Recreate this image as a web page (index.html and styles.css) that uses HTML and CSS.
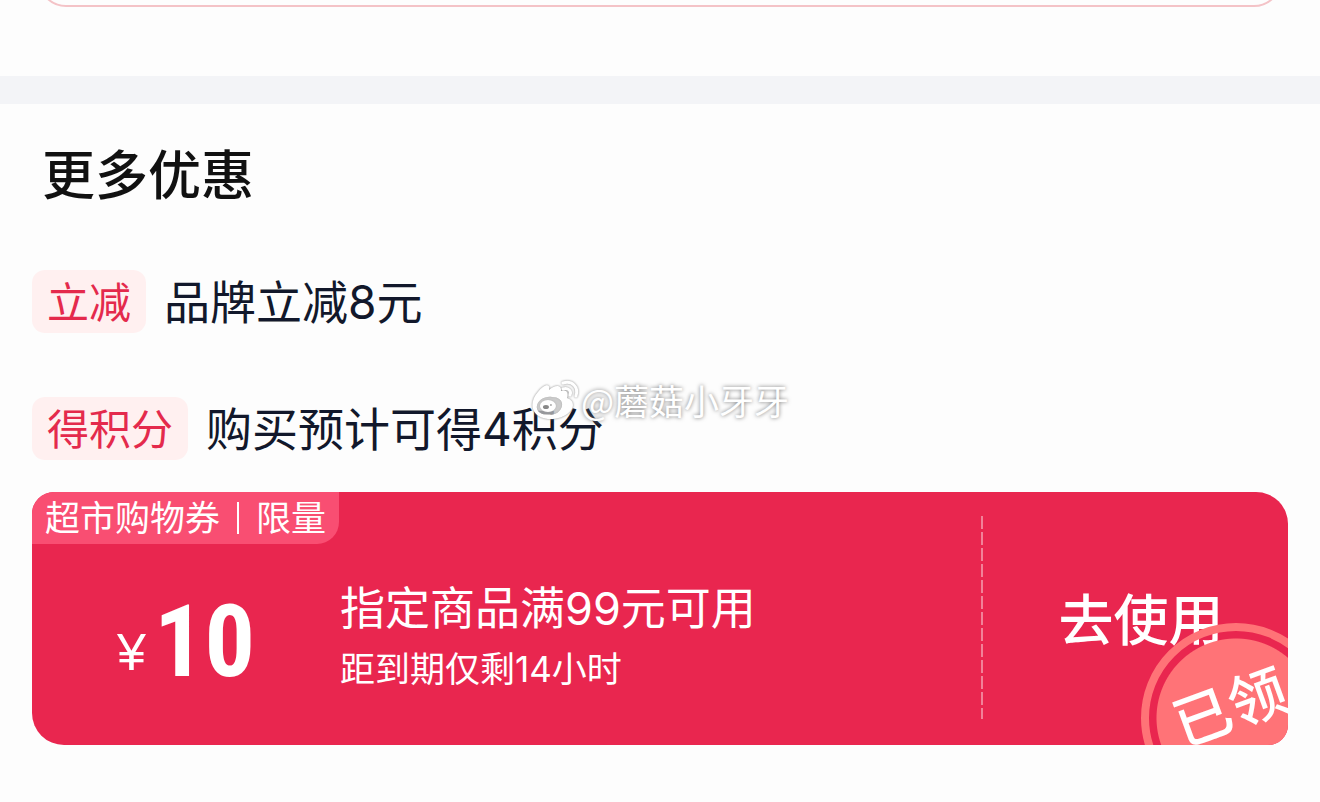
FILE: index.html
```html
<!DOCTYPE html>
<html lang="zh-CN">
<head>
<meta charset="utf-8">
<meta name="viewport" content="width=device-width, initial-scale=1">
<title>更多优惠</title>
<link rel="stylesheet" href="styles.css">
</head>
<body>
<div class="page">
  <section class="previous"><div class="previous-card"></div></section>
  <main class="offers">
    <h1 class="title">更多优惠</h1>
    <ul class="benefits">
      <li class="benefit"><span class="tag">立减</span><span class="benefit-text">品牌立减8元</span></li>
      <li class="benefit"><span class="tag">得积分</span><span class="benefit-text">购买预计可得4积分</span></li>
    </ul>
    <article class="coupon">
      <div class="coupon-label"><span>超市购物券</span><span class="label-rule"></span><span>限量</span></div>
      <div class="amount"><span class="currency">¥</span><span class="value">10</span></div>
      <div class="details">
        <p class="condition">指定商品满99元可用</p>
        <p class="expiry">距到期仅剩14小时</p>
      </div>
      <svg class="divider" width="2" height="205" viewBox="0 0 2 205" aria-hidden="true"><path d="M1 0V203" stroke="#fff" stroke-opacity=".42" stroke-width="2" stroke-dasharray="13 3"/></svg>
      <button class="use" type="button">去使用</button>
      <div class="stamp"><span class="stamp-text">已领</span></div>
    </article>
  </main>
  <div class="watermark">
    <svg class="weibo" width="50" height="44" viewBox="0 0 50 44" aria-hidden="true">
      <path fill="#fff" fill-rule="evenodd" d="M30 13C31 5 22 8 18 12C20 5 13 6 7 14C-2 24 -1 39 17 41C31 42 42 34 42 27C42 23 39 21 36 20C38 14 35 11 30 13ZM18 37C10 37 5 33 6 28C7 22 14 18 21 19C28 19 32 23 31 28C30 33 25 37 18 37Z"/>
      <path fill="#d8d8d8" fill-opacity=".5" d="M6 28C7 22 14 18 21 19C28 19 32 23 31 28C30 33 25 37 18 37C10 37 5 33 6 28Z"/>
      <ellipse cx="17" cy="28" rx="8" ry="6" fill="#fff"/>
      <ellipse cx="15" cy="29" rx="3" ry="2" fill="#888"/>
      <circle cx="20" cy="27" r="1" fill="#aaa"/>
      <path fill="none" stroke="#fff" stroke-width="3" stroke-linecap="round" d="M32 5C41 2 48 9 45 18M32 11C37 9 41 13 39 17"/>
    </svg>
    <span>@蘑菇小牙牙</span>
  </div>
</div>
</body>
</html>
```
FILE: styles.css
```css
* { box-sizing: border-box; }
body {
  margin: 0;
  background: #fdfdfd;
  color: #12182b;
  font-family: Inter, "Noto Sans CJK SC", sans-serif;
}
.page { position: relative; overflow: hidden; }
.previous {
  display: flex;
  align-items: flex-end;
  height: 104px;
  padding: 0 38px 69px;
  border-bottom: 28px solid #f3f4f7;
}
.previous-card {
  flex: 1;
  height: 64px;
  border: 2px solid #f4c3c7;
  border-radius: 28px;
}
.offers { padding: 36px 32px 57px; }
.title {
  margin: 0 0 58px;
  padding-left: 10px;
  color: #111;
  font-size: 53px;
  font-weight: 500;
  line-height: 72px;
}
.benefits {
  display: grid;
  gap: 64px;
  margin: 0 0 32px;
  padding: 0;
  list-style: none;
}
.benefit { display: flex; align-items: center; gap: 18px; }
.tag {
  padding: 3px 15px 0;
  border-radius: 13px;
  background: #fff0f0;
  color: #e42a4c;
  font-size: 42px;
  line-height: 60px;
}
.benefit-text { font-size: 46px; line-height: 60px; }
.coupon {
  position: relative;
  display: grid;
  grid-template-columns: 308fr 641fr 2px 305fr;
  align-items: center;
  padding: 24px 0;
  overflow: hidden;
  border-radius: 22px 32px 20px 32px;
  background: #e9264f;
  color: #fff;
}
.coupon-label {
  position: absolute;
  top: 0;
  left: 0;
  display: flex;
  align-items: center;
  padding: 0 13px;
  border-bottom-right-radius: 22px;
  background: #f94e72;
  font-size: 35px;
  line-height: 52px;
}
.label-rule { width: 2px; height: 32px; margin: 0 17px; background: #fff; }
.amount {
  display: flex;
  align-items: flex-end;
  gap: 8px;
  padding: 46px 0 0 85px;
}
.currency { font-family: "Liberation Sans", Arial, sans-serif; font-size: 52px; line-height: 84px; }
.value { font-family: "Roboto Condensed", Roboto, sans-serif; font-size: 100px; font-weight: 700; line-height: 104px; }
.details { padding-top: 36px; }
.condition, .expiry { margin: 0; }
.condition { font-size: 45px; line-height: 64px; }
.expiry { font-size: 35px; line-height: 56px; }
.use {
  padding: 2px 0 0 11px;
  border: 0;
  background: transparent;
  color: #fff;
  font: inherit;
  font-size: 55px;
  font-weight: 500;
  line-height: 72px;
}
.stamp {
  position: absolute;
  right: -43px;
  bottom: -68px;
  display: grid;
  place-items: center;
  width: 190px;
  height: 190px;
  border: 8px solid #ff7377;
  border-radius: 50%;
  background: radial-gradient(circle, #ff7377 79px, transparent 80px);
  pointer-events: none;
}
.stamp-text { padding: 0 4px 24px 0; font-size: 58px; font-weight: 500; line-height: 72px; transform: rotate(-20deg); }
.watermark {
  position: absolute;
  top: 374px;
  left: 50%;
  display: flex;
  align-items: center;
  transform: translateX(-50%);
  color: #fff;
  font-family: "Noto Sans CJK SC", sans-serif;
  font-size: 35px;
  line-height: 52px;
  white-space: nowrap;
  text-shadow: 0 0 4px #777;
}
.weibo { filter: drop-shadow(0 0 1px #888); }
```
